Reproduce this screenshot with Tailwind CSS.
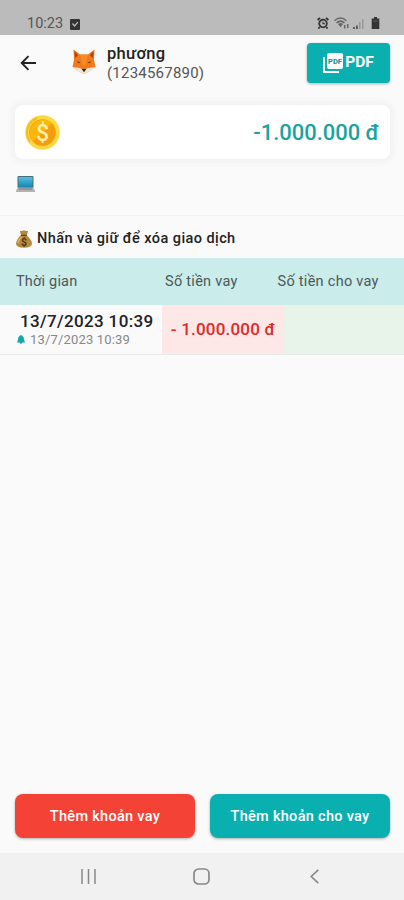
<!DOCTYPE html>
<html lang="vi">
<head>
    <meta charset="UTF-8">
    <meta name="viewport" content="width=device-width, initial-scale=1.0">
    <title>phương</title>
    <script src="https://cdn.jsdelivr.net/npm/@tailwindcss/browser@4"></script>
</head>
<body class="bg-[#fafafa] font-[Roboto,sans-serif]">
    <div class="flex flex-col w-[404px] h-[900px] overflow-hidden text-[#222]">
        <!-- Status bar -->
        <div class="flex h-[35px] shrink-0 items-end justify-between bg-[#bbb] pl-[27px] pr-[24px] pb-[3px] text-[#555]">
            <div class="flex items-center gap-[7px]">
                <span class="text-[14.5px] leading-[16px]">10:23</span>
                <svg class="w-[10px] h-[11px]" viewBox="0 0 10 11">
                    <rect width="10" height="11" rx="1" fill="#333"/>
                    <path d="M2.5 4.5 4.6 7 7.8 3.2" fill="none" stroke="#bbb" stroke-width="1.3"/>
                </svg>
            </div>
            <div class="flex items-center pb-[3px]">
                <svg class="w-[12px] h-[12px]" viewBox="0 0 12 12" fill="none" stroke="#333">
                    <circle cx="6" cy="6.5" r="3.8" stroke-width="1.8"/>
                    <path d="M6 4.4V6.8H8" stroke-width="1.1"/>
                    <path d="M.6 3 3 .8M11.4 3 9 .8M2.8 10 1.4 11.5M9.2 10l1.4 1.5" stroke-width="1.8"/>
                </svg>
                <svg class="ml-[5px] w-[16px] h-[12px]" viewBox="0 0 16 12" fill="none" stroke="#666">
                    <path d="M.6 3.7Q6.5-1.6 12.4 3.7M2.6 5.9Q6.5 2.3 10.4 5.9" stroke-width="1.5"/>
                    <path d="M4 7 6.5 10.2 9 7Q6.5 5.2 4 7Z" fill="#666" stroke="none"/>
                    <path d="M10.7 11.5V8M13.7 7v4" stroke-width="1.5"/>
                </svg>
                <svg class="ml-[3px] w-[11px] h-[11px]" viewBox="0 0 11 11">
                    <path d="M0 9h1.8v2H0zM3 7.5h1.8V11H3z" fill="#555"/>
                    <path d="M6 4h1.5v7H6zM9 1h1.5v10H9z" fill="#999"/>
                </svg>
                <svg class="ml-[7px] w-[9px] h-[12px]" viewBox="0 0 9 12" fill="#333">
                    <path d="M3 0h3v1.5h2.3V12H.7V1.5H3z"/>
                    <path d="M2.5 4h4" stroke="#666"/>
                </svg>
            </div>
        </div>

        <!-- App bar -->
        <div class="flex h-[70px] shrink-0 items-start pt-[8px] pl-[20px] pr-[14px]">
            <svg class="mt-[12px] w-[17px] h-[16px]" viewBox="0 0 17 16" fill="none" stroke="#222" stroke-width="1.9">
                <path d="M16 8H1.8M8.5 1.2 1.7 8l6.8 6.8"/>
            </svg>
            <svg class="ml-[35px] mt-[6px] w-[24px] h-[25px]" viewBox="0 0 24 25">
                <path d="M1.5.5 8 5.500h8L22.500.5 22 11l1.500 7L17 22.500 12 25 7 22.500.5 18 2 11z" fill="#f0791d"/>
                <path d="M2.300 2 6 6 3.300 9zM21.700 2 18 6l2.700 3z" fill="#a8430f"/>
                <path d="M8 5.500h8L13.500 16h-3z" fill="#f58d25"/>
                <path d="M.5 18 8 19 12 21.500l4-2.500 7.500-1L17 22.800 12 25 7 22.800z" fill="#f4e6d3"/>
                <path d="M5.500 12 8.500 14 6 14zM18.500 12l-3 2 2.500 0z" fill="#6b300f"/>
                <path d="M9.800 20.300Q12 19 14.200 20.300L12 23.300z" fill="#292321"/>
            </svg>
            <div class="ml-[11px] flex flex-col pt-px">
                <span class="text-[16.5px] leading-[19px] font-medium tracking-[0.3px]">phương</span>
                <span class="text-[15px] leading-[20px] tracking-[0.22px] text-[#555]">(1234567890)</span>
            </div>
            <div class="ml-auto flex w-[83px] h-[40px] items-center justify-center gap-[2px] rounded-[4px] bg-[#0aafb0] text-white shadow-[0_1px_3px_rgba(0,0,0,0.3)]">
                <svg class="w-[20px] h-[20px]" viewBox="0 0 20 20">
                    <path d="M1 4v15h15" fill="none" stroke="#fff" stroke-width="2"/>
                    <rect x="4" width="16" height="16" rx="2" fill="#fff"/>
                    <text x="12" y="10.500" text-anchor="middle" font-family="Roboto" font-size="7.500" font-weight="700" fill="#0a8f93">PDF</text>
                </svg>
                <span class="text-[15.5px] font-bold">PDF</span>
            </div>
        </div>

        <!-- Balance card -->
        <div class="ml-[15px] mr-[14px] flex h-[54px] shrink-0 items-center justify-between rounded-[8px] bg-white pl-[10px] pr-[11px] shadow-[0_0_6px_4px_rgba(0,0,0,0.035)]">
            <svg class="w-[35px] h-[35px]" viewBox="0 0 35 35">
                <circle cx="17.500" cy="17.500" r="17.300" fill="#fbd943"/>
                <path d="M5 27A16 16 0 0 1 12 3" fill="none" stroke="#f3bd25" stroke-width="2"/>
                <circle cx="17.500" cy="17.500" r="13.300" fill="#f59d0b"/>
                <path d="M8 26.500A13.300 13.300 0 0 1 27 8z" fill="#fbb70c"/>
                <text x="17.500" y="25.500" text-anchor="middle" font-family="Roboto" font-size="23" font-weight="500" fill="#fff0a5">$</text>
            </svg>
            <span class="text-[22px] font-medium tracking-[-0.05px] text-[#1ba39f]">-1.000.000 đ</span>
        </div>

        <div class="h-[57px] shrink-0 border-b border-[#f3f3f3] pl-[16px] pt-[17px]">
            <svg class="w-[19px] h-[16px]" viewBox="0 0 19 16">
                <defs>
                    <linearGradient id="screen" x2="0" y2="1">
                        <stop stop-color="#55bfe0"/>
                        <stop offset="1" stop-color="#1586b7"/>
                    </linearGradient>
                </defs>
                <rect x="1.500" width="16" height="12" rx="1" fill="#4a6c78"/>
                <rect x="2.500" y="1" width="14" height="10" fill="url(#screen)"/>
                <path d="M2 11.500h15l2 3V16H0v-1.500z" fill="#b5b1b2"/>
                <path d="M3 12.500h13l.6 1H2.400z" fill="#77797c"/>
            </svg>
        </div>

        <!-- Hint -->
        <div class="flex h-[42px] shrink-0 items-center gap-[5px] pl-[16px] pt-[4px]">
            <svg class="w-[16px] h-[18px]" viewBox="0 0 16 18">
                <path d="M5 5Q4 2 4 .8 6 1.500 8 .3 10 1.500 12 .8 12 3 10.500 5 16 10 16 14 15.500 17.700 8 17.700T0 14Q.5 9 5 5z" fill="#b58a3c"/>
                <path d="M5 5.300h6" stroke="#674719" stroke-width="1.300"/>
                <path d="M2 13Q3 9 5.500 7" fill="none" stroke="#d9b566" stroke-width="1.500"/>
                <text x="8" y="15.500" text-anchor="middle" font-family="Roboto" font-size="10.500" font-weight="700" fill="#4c3513">$</text>
            </svg>
            <span class="text-[14.5px] font-medium tracking-[0.42px]">Nhấn và giữ để xóa giao dịch</span>
        </div>

        <!-- Table header -->
        <div class="grid h-[47px] shrink-0 grid-cols-[165px_112.5px_1fr] items-center bg-[#caeceb] text-[14.5px] text-[#4a5858]">
            <span class="pl-[16px] tracking-[0.2px]">Thời gian</span>
            <span class="tracking-[0.28px]">Số tiền vay</span>
            <span class="tracking-[0.28px]">Số tiền cho vay</span>
        </div>

        <!-- Table row -->
        <div class="grid h-[50px] shrink-0 grid-cols-[162px_122px_1fr] border-b border-[#e7eaea]">
            <div class="flex flex-col pt-[7px]">
                <span class="pl-[20px] text-[17px] leading-[19px] font-medium tracking-[0.35px]">13/7/2023 10:39</span>
                <div class="flex items-center gap-[5px] pl-[17px] text-[13px] leading-[17px] tracking-[0.17px] text-[#888]">
                    <svg class="w-[8px] h-[9px]" viewBox="0 0 8 9" fill="#12aaa8">
                        <path d="M4 0Q7 1 7 4.500L8 7.500H0L1 4.500Q1 1 4 0zM2.500 7.500h3L4 9z"/>
                    </svg>
                    <span>13/7/2023 10:39</span>
                </div>
            </div>
            <div class="flex items-center justify-center bg-[#fde7e7] text-[17px] font-medium tracking-[0.2px] text-[#df2a28]">- 1.000.000 đ</div>
            <div class="bg-[#e8f3e9]"></div>
        </div>

        <!-- Bottom actions -->
        <div class="mt-auto flex h-[59px] shrink-0 gap-[15px] pl-[15px] pr-[14px] text-[14.500px] font-medium tracking-[0.3px] text-white">
            <div class="flex h-[44px] flex-1 items-center justify-center rounded-[8px] bg-[#f44336] pt-px shadow-[0_1px_3px_rgba(0,0,0,0.3)]">Thêm khoản vay</div>
            <div class="flex h-[44px] flex-1 items-center justify-center rounded-[8px] bg-[#0aafb0] pt-px shadow-[0_1px_3px_rgba(0,0,0,0.3)]">Thêm khoản cho vay</div>
        </div>

        <!-- Navigation bar -->
        <div class="flex h-[47px] shrink-0 items-center bg-[#f1f1f1] pl-[81px]">
            <svg class="w-[15px] h-[15px]" viewBox="0 0 15 15" stroke="#888" stroke-width="1.500">
                <path d="M1 0v15M7.500 0v15M14 0v15"/>
            </svg>
            <svg class="ml-[97px] w-[17px] h-[17px]" viewBox="0 0 17 17" fill="none" stroke="#888" stroke-width="1.700">
                <rect x="1" y="1" width="15" height="15" rx="4.500"/>
            </svg>
            <svg class="ml-[100px] w-[9px] h-[15px]" viewBox="0 0 9 15" fill="none" stroke="#888" stroke-width="1.600">
                <path d="M8.300.8 1.200 7.500l7.100 6.700"/>
            </svg>
        </div>
    </div>
</body>
</html>
